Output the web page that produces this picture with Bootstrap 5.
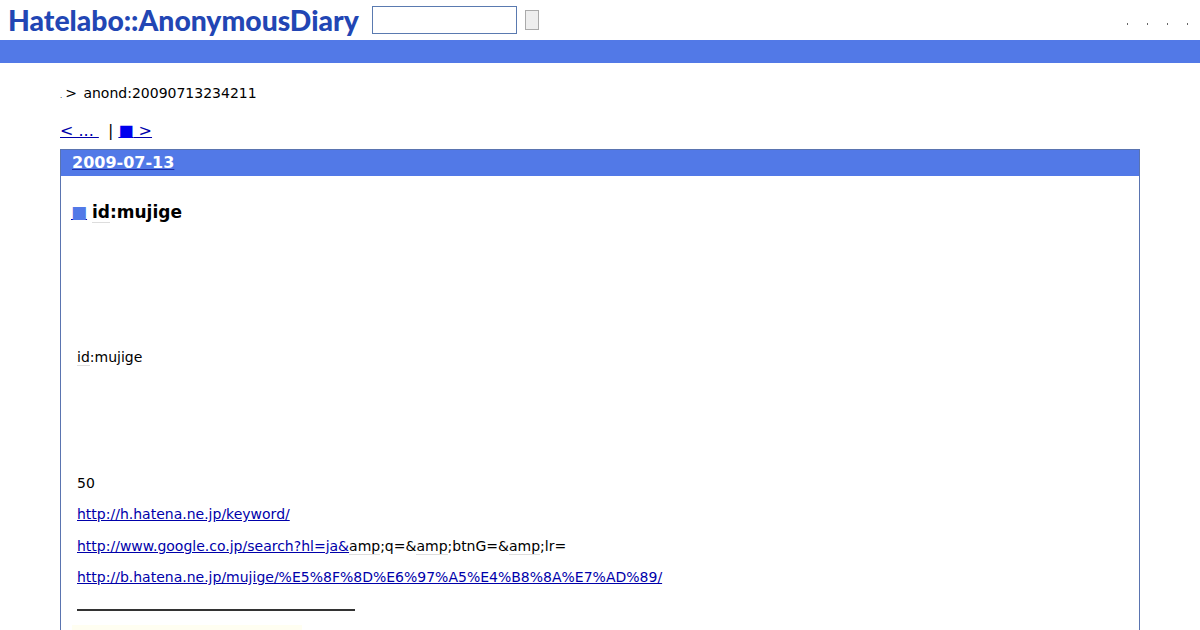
<!DOCTYPE html>
<html lang="ja">
<head>
<meta charset="utf-8">
<title>anond:20090713234211</title>
<link href="https://cdn.jsdelivr.net/npm/bootstrap@5.3.0/dist/css/bootstrap.min.css" rel="stylesheet">
<style>
html,body{height:630px;overflow:hidden}
body{font-family:"DejaVu Sans",sans-serif;font-size:14px;color:#000;background:#fff;line-height:1.5}
a{color:#00a}
.hdr{height:40px;padding-left:8px}
.logo{font-family:Lato,"Liberation Sans",sans-serif;font-weight:900;font-size:28.3px;color:#2246b4;line-height:40px;width:364px;white-space:nowrap}
.sbox{width:145px;height:28px;border:1px solid #5a7ab0;background:#fff;padding:0;margin-right:8px}
.sbtn{width:14px;height:20px;border:1px solid #aaa;background:#eee;padding:0}
.dots{gap:19px;padding-right:12px;padding-top:8px}
.dots span{display:block;width:1px;height:2px;background:#666}
.strip{height:23px;background:#5279e7}
.crumb{padding:21px 60px 0;height:58px;line-height:18px}
.crumb .dot{font-size:7px}
.crumb .sep{margin-right:2px;margin-left:3px}
.pager{padding:0 60px;font-size:16px;line-height:20px;height:28px}
.pager a{color:#00a}
.pager a:first-child{padding-right:4px}
.pager .sq{color:#00e}
.daybox{margin:0 60px;border:1px solid #5a74b0;border-bottom:0;height:500px}
.dayhead{background:#5279e7;height:26px;padding-left:11px;font-size:16px;font-weight:700;line-height:26px;margin:0}
.dayhead a{color:#fff;text-decoration-color:#1c2fa8}
.ttl{font-size:17px;font-weight:700;margin:0;padding:24px 0 0 10px;line-height:24px;height:170.6px}
.ttl a{color:#5279e7;text-decoration-color:#00a}
.ttl .kw{margin-left:-1px}
.kw{border-bottom:1px solid #ddd}
.bodytxt{padding-left:16px}
.bodytxt p{margin:0;height:31.5px;line-height:21px}
.gap1{height:63px!important}
.rule{width:278px;border-bottom:2px solid #333;height:12px!important}
.bodytxt .paleband{width:230px;height:6px;margin:14px 0 0 -5px;background:#fffef1}
</style>
</head>
<body>
<header class="hdr d-flex align-items-center">
  <div class="logo">Hatelabo::AnonymousDiary</div>
  <input class="sbox" type="text" aria-label="search">
  <button class="sbtn" type="button" aria-label="submit"></button>
  <div class="dots ms-auto d-flex"><span></span><span></span><span></span><span></span></div>
</header>
<div class="strip"></div>
<div class="crumb"><span class="dot">.</span><span class="sep">&gt;</span> anond:20090713234211</div>
<div class="pager"><a href="#">&lt; ... </a>&nbsp;| <a href="#"><span class="sq">■</span> &gt;</a></div>
<div class="daybox">
  <h2 class="dayhead"><a href="#">2009-07-13</a></h2>
  <h3 class="ttl"><a href="#">■</a> <span class="kw">id</span>:mujige</h3>
  <div class="bodytxt">
    <p class="gap1"><span class="kw">id</span>:mujige</p>
    <p style="height:63px"></p>
    <p>50</p>
    <p><a href="#">http://h.hatena.ne.jp/keyword/</a></p>
    <p><a href="#">http://www.google.co.jp/search?hl=ja&amp;</a><span class="kw">amp</span>;q=&amp;<span class="kw">amp</span>;btnG=&amp;<span class="kw">amp</span>;lr=</p>
    <p><a href="#">http://b.hatena.ne.jp/mujige/%E5%8F%8D%E6%97%A5%E4%B8%8A%E7%AD%89/</a></p>
    <p class="rule"></p>
    <p class="paleband"></p>
  </div>
</div>
</body>
</html>
